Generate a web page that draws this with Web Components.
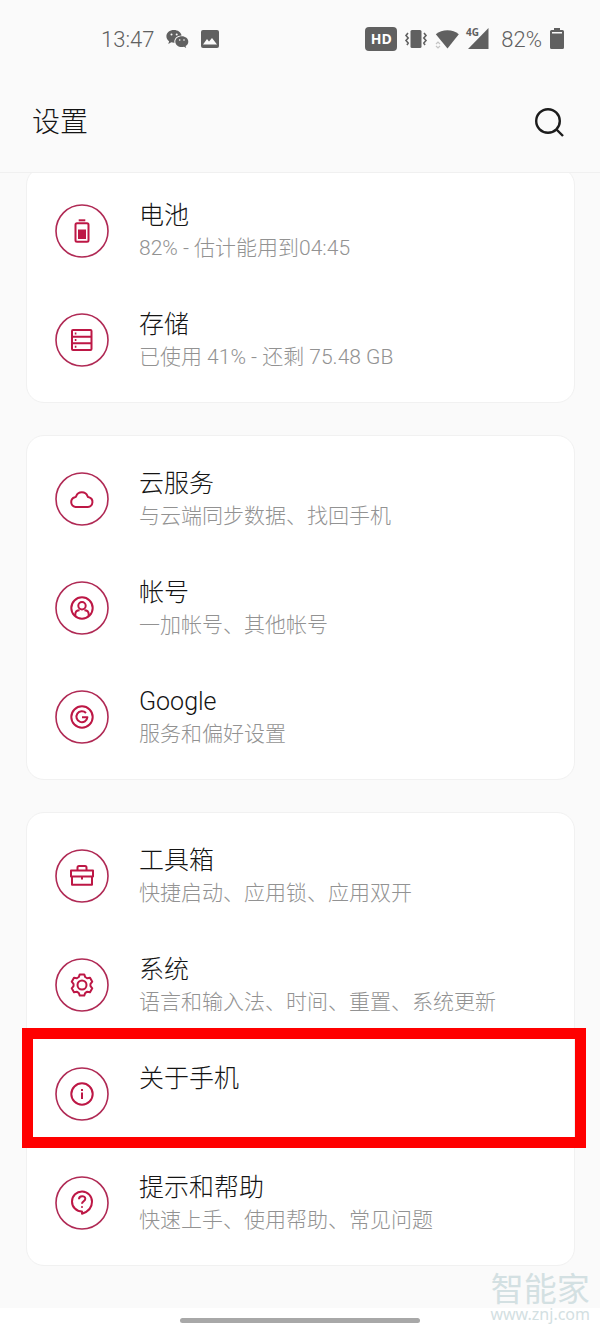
<!DOCTYPE html>
<html lang="zh-CN">
<head>
<meta charset="utf-8">
<meta name="viewport" content="width=device-width, initial-scale=1">
<title>设置</title>
<style>
  html { background: #fff; }
  body {
    margin: 0;
    font-family: Roboto, "Noto Sans CJK SC", sans-serif;
    font-weight: 300;
    color: #141414;
  }
</style>
</head>
<body>
<settings-page>
  <status-bar slot="top" time="13:47" battery="82%"></status-bar>
  <app-header slot="top">设置</app-header>

  <settings-card>
    <settings-item icon="battery" label="电池">82% - 估计能用到04:45</settings-item>
    <settings-item icon="storage" label="存储">已使用 41% - 还剩 75.48 GB</settings-item>
  </settings-card>
  <settings-card>
    <settings-item icon="cloud" label="云服务">与云端同步数据、找回手机</settings-item>
    <settings-item icon="account" label="帐号">一加帐号、其他帐号</settings-item>
    <settings-item icon="google" label="Google">服务和偏好设置</settings-item>
  </settings-card>
  <settings-card>
    <settings-item icon="toolbox" label="工具箱">快捷启动、应用锁、应用双开</settings-item>
    <settings-item icon="system" label="系统">语言和输入法、时间、重置、系统更新</settings-item>
    <settings-item icon="info" label="关于手机" highlighted></settings-item>
    <settings-item icon="help" label="提示和帮助">快速上手、使用帮助、常见问题</settings-item>
  </settings-card>

  <gesture-bar slot="bottom"></gesture-bar>
  <site-mark slot="bottom" name="智能家">www.znj.com</site-mark>
</settings-page>

<script>
const define = (name, render) => customElements.define(name, class extends HTMLElement {
  constructor() {
    super();
    this.attachShadow({ mode: 'open' });
  }
  connectedCallback() {
    this.shadowRoot.innerHTML = render(this);
  }
});

define('settings-page', () => `
  <style>
    :host { display: flex; flex-direction: column; min-height: 100vh; position: relative; background: #fafafa; }
    main { flex: 1; overflow: hidden; padding: 0 25px 40px 26px; }
    .list { display: flex; flex-direction: column; gap: 32px; margin-top: -6px; }
  </style>
  <slot name="top"></slot>
  <main><div class="list"><slot></slot></div></main>
  <slot name="bottom"></slot>
`);

define('status-bar', el => `
  <style>
    :host { display: flex; align-items: center; justify-content: space-between; height: 78px; padding: 0 36px 0 101px; font-size: 22px; color: #606060; }
    div { display: flex; align-items: center; }
    .left { gap: 12px; }
    .right { gap: 8px; }
    svg { display: block; fill: currentColor; overflow: visible; }
    .hd { width: 32px; height: 24px; border-radius: 4px; background: #606060; color: #fff; font: 700 14px/24px "Open Sans", sans-serif; text-align: center; }
    .pct { margin-left: 4px; }
  </style>
  <div class="left">
    <span>${el.getAttribute('time')}</span>
    <svg width="23" height="20" viewBox="0 0 23 20" aria-hidden="true">
      <path d="M8 1C3.600 1 .4 3.700.4 7.300c0 2 1 3.700 2.700 4.900l-.8 2.700 3-1.600c.8.200 1.700.4 2.700.4h.5c-.9-4.200 2.600-7.300 7.100-7.300C14.900 3.200 11.800 1 8 1z"/>
      <path d="M22.300 12.700c0-3-2.900-5.400-6.500-5.400s-6.500 2.400-6.500 5.400 2.900 5.400 6.500 5.400c.8 0 1.500-.1 2.200-.3l2.200 1.300-.6-2c1.700-1 2.700-2.600 2.700-4.400z"/>
      <g fill="#fafafa"><circle cx="5.500" cy="5.600" r="1"/><circle cx="10.700" cy="5.600" r="1"/><circle cx="13.700" cy="11" r=".8"/><circle cx="18" cy="11" r=".8"/></g>
    </svg>
    <svg width="18" height="18" viewBox="0 0 18 18" aria-hidden="true">
      <rect width="18" height="18" rx="2"/><path fill="#fafafa" d="M2 14.500 6 9l2 2.500L11 8l5 6.500z"/>
    </svg>
  </div>
  <div class="right">
    <span class="hd">HD</span>
    <svg width="22" height="20" viewBox="0 0 22 20" aria-hidden="true">
      <rect x="5.500" y="1" width="11" height="18" rx="1.500"/>
      <path fill="none" stroke="currentColor" stroke-width="1.600" d="M3 4 1 6.500 3.200 9 1 11.500 3.200 14 2 16M19 4l2 2.500L18.800 9l2.200 2.500-2.200 2.500 1.200 2"/>
    </svg>
    <svg width="24" height="20" viewBox="0 0 24 20" aria-hidden="true">
      <path d="M12.500 19.500.8 5.200C7 0 18 0 23.800 5.200z"/>
      <path fill="none" stroke="#c4c4c4" stroke-width="1.200" d="m1 15 2-2 2 2M1 17l2 2 2-2"/>
    </svg>
    <svg width="22" height="22" viewBox="0 0 22 22" role="img" aria-label="4G">
      <path d="M21.500 0v21H1z"/>
      <text x="-1" y="8" font-family="Open Sans" font-size="10" font-weight="700">4G</text>
    </svg>
    <span class="pct">${el.getAttribute('battery')}</span>
    <svg width="14" height="22" viewBox="0 0 14 22" aria-hidden="true">
      <path d="M4 0h6v2h2.500q1.500 0 1.500 1.500v16q0 1.500-1.500 1.500h-11Q0 21 0 19.500v-16Q0 2 1.500 2H4z"/><path fill="#fafafa" d="M2 4h10v1.500H2z"/>
    </svg>
  </div>
`);

define('app-header', () => `
  <style>
    :host { display: flex; align-items: center; justify-content: space-between; height: 94px; padding: 0 34px 0 32px; border-bottom: 1px solid #f0f0f0; }
    h1 { margin: 0 0 4px; font-size: 28px; line-height: 40px; font-weight: 300; }
    button { margin: 0 0 6px; padding: 0; border: 0; background: none; color: #1c1c1c; }
    svg { display: block; fill: none; stroke: currentColor; stroke-width: 2.400; }
  </style>
  <h1><slot></slot></h1>
  <button type="button" aria-label="搜索">
    <svg width="34" height="34" viewBox="0 0 34 34"><circle cx="16" cy="16" r="11.800"/><path d="m24 24 7 7"/></svg>
  </button>
`);

define('settings-card', () => `
  <style>
    :host { display: block; box-sizing: border-box; padding: 8px 0; border: 1px solid #f1f1f1; border-radius: 18px; background: #fff; }
  </style>
  <slot></slot>
`);

const glyphs = {
  battery: `<rect x="20.500" y="19.300" width="13" height="18.400" rx="1.500"/><path d="M23.700 16.300h6.600"/><path fill="currentColor" stroke="none" d="M23 25.500h8V35h-8z"/>`,
  storage: `<rect x="17" y="17" width="19.500" height="20" rx="1"/><path d="M17 23.700h19.500M17 30.300h19.500"/><path d="M19.800 20.400h1.600M19.800 27h1.600M19.800 33.700h1.600"/>`,
  cloud: `<path d="M20.500 35h12.300a5 5 0 0 0 1-9.800c-.8 0-1.200-.2-1.300-1a6 6 0 0 0-11.300 0c-.2.700-.5 1-1.200 1a5 5 0 0 0 .5 9.800z"/>`,
  account: `<circle cx="27" cy="27" r="10.700"/><circle cx="27" cy="24.800" r="3.700"/><path d="M20.300 35v-1.500q0-4.300 4.300-4.300M33.700 35v-1.500q0-4.300-4.300-4.300"/>`,
  google: `<circle cx="27" cy="27" r="10.700"/><path d="M31 23a5.500 5.500 0 1 0 1.400 4.200H27"/>`,
  toolbox: `<path d="M16 21.500h22v6H16zM17 27.500h20v8.300H17zM22.500 21.500v-3q0-1.500 1.500-1.500h6q1.500 0 1.500 1.500v3M27 27.500v3"/>`,
  system: `<path transform="translate(27 27)" d="M-3.220-7.970-2.250-10.560H2.250L3.220-7.970Q4.400-7.200 5.290-6.770L8.020-7.230 10.270-3.330 8.510-1.200Q8.300 0 8.510 1.200L10.270 3.330 8.020 7.230 5.290 6.770Q4.400 7.200 3.220 7.970L2.250 10.560H-2.250L-3.220 7.970Q-4.400 7.200-5.290 6.770L-8.020 7.230-10.270 3.330-8.510 1.200Q-8.300 0-8.510-1.200L-10.270-3.330-8.020-7.230-5.290-6.770Q-4.400-7.200-3.220-7.970z"/><circle cx="27" cy="27" r="4.500"/>`,
  info: `<circle cx="27" cy="27" r="10.700"/><path d="M27 25.500V32M27 22v2"/>`,
  help: `<path d="M27 35.500v2.300c6-2 10-6.500 10-12a10 10 0 1 0-10 9.700z"/><path d="M24 23.200c0-4 6.300-4 6.300-.4 0 2.400-3.300 2.600-3.300 5"/><path d="M27 30.200v1.600"/>`
};

define('settings-item', el => `
  <style>
    :host { display: block; position: relative; }
    a { display: flex; align-items: center; gap: 30px; height: 109px; padding: 0 28px; color: inherit; text-decoration: none; }
    svg { flex: none; fill: none; stroke: currentColor; stroke-width: 2; stroke-linejoin: round; color: #bd1745; }
    .ring { stroke: #b02a55; stroke-width: 1.600; }
    .text { display: flex; flex-direction: column; min-width: 0; padding-top: 2px; }
    .label { font-size: 25px; line-height: 32px; }
    .detail { min-height: 32px; font-size: 21px; line-height: 32px; color: #929292; }
    .mark { position: absolute; inset: -11px -12px 0 -5px; border: 11px solid #f00; pointer-events: none; }
  </style>
  <a href="#${el.getAttribute('icon')}">
    <svg width="54" height="54" viewBox="0 0 54 54" aria-hidden="true"><circle class="ring" cx="27" cy="27" r="26"/>${glyphs[el.getAttribute('icon')]}</svg>
    <span class="text">
      <span class="label">${el.getAttribute('label')}</span>
      <span class="detail"><slot></slot></span>
    </span>
  </a>
  ${el.hasAttribute('highlighted') ? '<div class="mark"></div>' : ''}
`);

define('gesture-bar', () => `
  <style>
    :host { display: flex; align-items: center; justify-content: center; height: 25px; background: #fff; }
    div { width: 40%; height: 5px; border-radius: 3px; background: #a8a8a8; }
  </style>
  <div></div>
`);

define('site-mark', el => `
  <style>
    :host { position: absolute; right: 10px; bottom: 9px; display: flex; flex-direction: column; align-items: center; color: #d3e0e2; pointer-events: none; }
    b { font: 400 33px/34px "Noto Sans CJK SC", sans-serif; }
    span { font: 400 16px/20px "Noto Sans", sans-serif; }
  </style>
  <b>${el.getAttribute('name')}</b>
  <span><slot></slot></span>
`);
</script>
</body>
</html>
